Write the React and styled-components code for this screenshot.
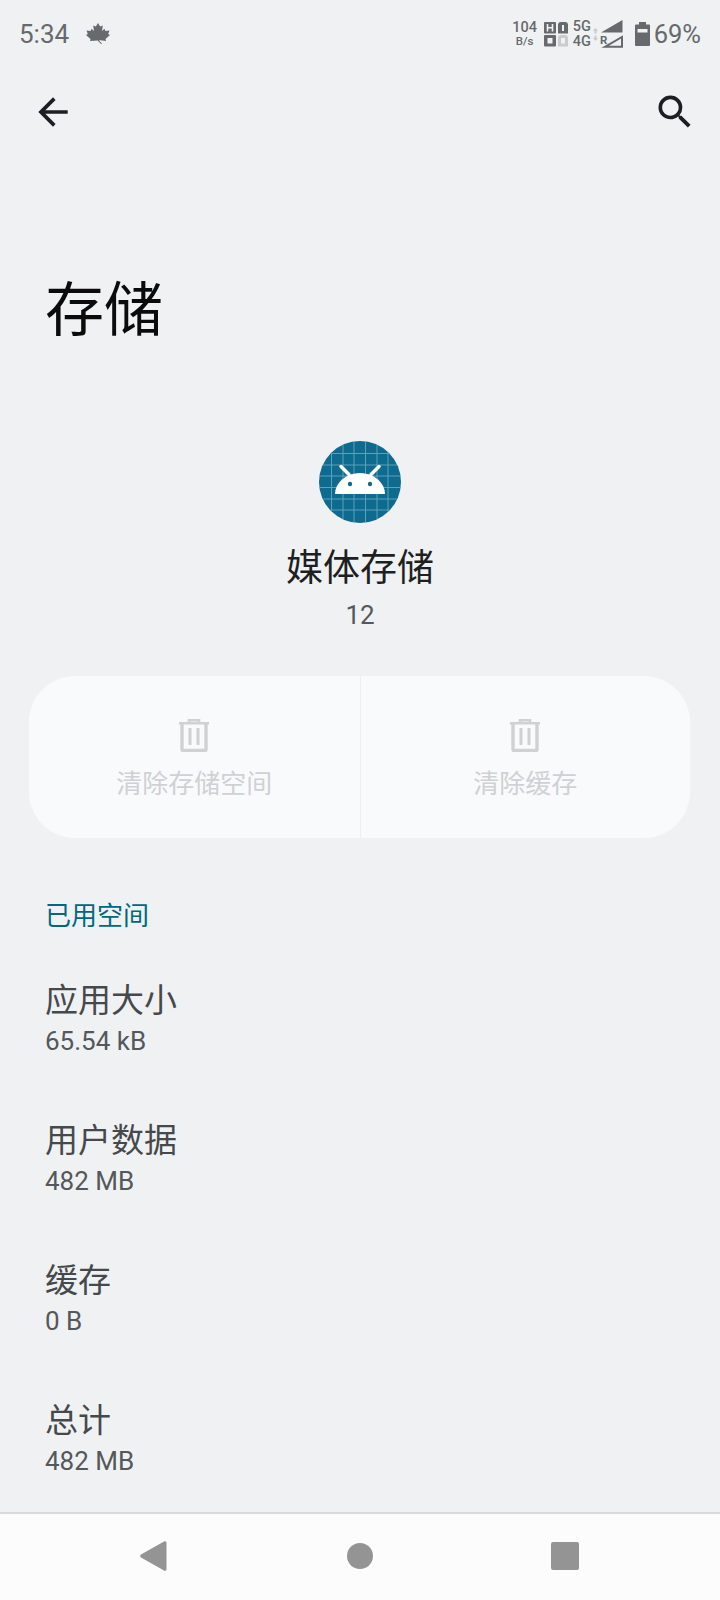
import React from "react";
import styled, { createGlobalStyle } from "styled-components";

const Global = createGlobalStyle`
  html, body { margin: 0; padding: 0; background: #f0f1f3; }
  * { box-sizing: border-box; }
`;

const CJK = `Roboto, "Noto Sans CJK SC", sans-serif`;
const INK = "#666a6c";

const Page = styled.div`
  width: 720px;
  height: 1600px;
  display: flex;
  flex-direction: column;
  background: #f0f1f3;
  font-family: ${CJK};
  overflow: hidden;
  & > * { flex-shrink: 0; }
`;

const StatusBar = styled.div`
  height: 68px;
  padding: 0 19px 0 19px;
  display: flex;
  align-items: center;
  justify-content: space-between;
  color: ${INK};
`;

const StatusLeft = styled.div`
  display: flex;
  align-items: center;
  gap: 17px;
  font-size: 26px;
`;

const StatusRight = styled.div`
  display: flex;
  align-items: center;
`;

const Slot = styled.div`
  display: flex;
  margin-left: ${(p) => p.$gap || 0}px;
`;

const Speed = styled.div`
  width: 24px;
  display: flex;
  flex-direction: column;
  align-items: center;
  font-size: 14.500px;
  line-height: 14px;
  font-weight: 500;
  & small { font-size: 11.500px; line-height: 12px; font-weight: 500; }
`;

const NetTypes = styled.div`
  margin-left: 5px;
  width: 18px;
  display: flex;
  flex-direction: column;
  font-size: 14.500px;
  line-height: 15px;
  font-weight: 500;
`;

const BatteryText = styled.span`
  font-size: 25.500px;
  margin-left: 4px;
`;

const Toolbar = styled.div`
  height: 44px;
  margin-top: 22px;
  padding: 0 23px 0 31px;
  display: flex;
  align-items: center;
  justify-content: space-between;
  color: #1c1f21;
`;

const Title = styled.h1`
  margin: 132px 0 0 45px;
  height: 90px;
  font-size: 59px;
  line-height: 90px;
  font-weight: 400;
  color: #0b0b0b;
`;

const AppHeader = styled.div`
  margin-top: 85px;
  display: flex;
  flex-direction: column;
  align-items: center;
`;

const AppName = styled.div`
  margin-top: 18px;
  font-size: 37px;
  line-height: 56px;
  color: #1d1f21;
`;

const AppVersion = styled.div`
  margin-top: 1px;
  font-size: 26px;
  line-height: 34px;
  color: #54585b;
`;

const ActionCard = styled.div`
  margin: 44px 30px 0 29px;
  height: 162px;
  border-radius: 46px;
  background: #f9fafc;
  display: grid;
  grid-template-columns: 1fr 1fr;
  overflow: hidden;
`;

const ActionButton = styled.div`
  display: flex;
  flex-direction: column;
  align-items: center;
  padding-top: 43px;
  color: #cfd1d3;
  font-size: 26px;
  line-height: 36px;
  & + & { border-left: 1px solid #eeeff1; }
  & svg { margin-bottom: 14px; }
`;

const SectionLabel = styled.div`
  margin: 58px 0 0 45px;
  font-size: 26px;
  line-height: 40px;
  color: #00687f;
`;

const Rows = styled.div`
  flex: 1 1 0;
  min-height: 0;
  margin-top: 40px;
  padding-left: 45px;
  display: flex;
  flex-direction: column;
`;

const Row = styled.div`
  flex: none;
  height: 140px;
`;

const RowTitle = styled.div`
  font-size: 33px;
  line-height: 50px;
  color: #46494c;
`;

const RowValue = styled.div`
  font-size: 26px;
  line-height: 30px;
  color: #54585b;
`;

const NavBar = styled.div`
  height: 88px;
  background: #fcfcfc;
  border-top: 2px solid #d7d9db;
  display: flex;
  align-items: center;
  justify-content: center;
  color: #949494;
  padding-bottom: 2px;
`;

const NavSlot = styled.div`
  display: flex;
  justify-content: center;
  width: 205px;
`;

const NavBack = styled.svg`
  margin-right: 3px;
`;

const ArrowBack = () => (
  <svg width="44" height="44" viewBox="0 0 24 24" fill="currentColor">
    <path d="M20 11H7.83l5.59-5.59L12 4l-8 8 8 8 1.41-1.41L7.83 13H20v-2z" />
  </svg>
);

const Search = () => (
  <svg width="44" height="44" viewBox="0 0 24 24" fill="currentColor">
    <path d="M15.5 14h-.79l-.28-.27A6.47 6.47 0 0 0 16 9.5 6.5 6.5 0 1 0 9.5 16c1.61 0 3.09-.59 4.23-1.57l.27.28v.79l5 4.99L20.49 19l-4.99-5zm-6 0C7.01 14 5 11.99 5 9.5S7.01 5 9.5 5 14 7.01 14 9.5 11.99 14 9.5 14z" />
  </svg>
);

const MapleLeaf = () => (
  <svg width="24" height="22" viewBox="0 0 24 22" fill="currentColor">
    <path d="M12 0l2.200 3.600 2.600-1-.8 5.400 2.400-2.200 1 2.200 4.100-.5-1.300 3.500L24 12l-4.500 4 .5 2-5.500-.8-1.700.3 3.200 3-1 .5-3.400-3.400L4 18l.5-2L0 12l1.800-1-1.300-3.500 4.100.5 1-2.200L8 8l-.8-5.400 2.600 1z" />
  </svg>
);

const SimBlocks = () => (
  <svg width="24" height="25" viewBox="0 0 24 25">
    <rect x="0" y="0" width="12" height="11.500" rx="1" fill={INK} />
    <rect x="0" y="13" width="12" height="11.500" rx="1" fill={INK} />
    <path d="M3.500 2v7.500M8.500 2v7.500M3.500 5.700h5" stroke="#f0f1f3" strokeWidth="1.600" fill="none" />
    <rect x="3.500" y="16" width="5" height="5.500" fill="#f0f1f3" />
    <path d="M17 0h4a3 3 0 0 1 3 3v8.500H14V3a3 3 0 0 1 3-3z" fill={INK} />
    <path d="M18 3h2v6h-2z" fill="#f0f1f3" />
    <path d="M17 13h4a3 3 0 0 1 3 3v8.500H14V16a3 3 0 0 1 3-3z" fill="#c9cbcd" />
    <rect x="17" y="16" width="4" height="5.500" fill="#f0f1f3" />
  </svg>
);

const NetArrows = () => (
  <svg width="5" height="13" viewBox="0 0 5 13" fill="#c9cbcd">
    <path d="M2.500 0 5 3H0zM2.500 13 0 10h5z" />
    <rect x="1.500" y="3" width="2" height="2.500" />
    <rect x="1.500" y="7.500" width="2" height="2.500" />
  </svg>
);

const Signal = () => (
  <svg width="23" height="28" viewBox="0 0 23 28">
    <path d="M1 12.500 22.500 0v12.500z" fill={INK} />
    <path d="M5 26.800 22 17v9.800z" fill="none" stroke={INK} strokeWidth="2" />
    <text x="0" y="23.500" fontSize="11.500" fontWeight="700" fill={INK} fontFamily="Roboto">R</text>
  </svg>
);

const Battery = () => (
  <svg width="15" height="24" viewBox="0 0 15 24">
    <rect x="4" y="0" width="7" height="3" fill={INK} />
    <path d="M1 2.500h13a1 1 0 0 1 1 1V23a1 1 0 0 1-1 1H1a1 1 0 0 1-1-1V3.500a1 1 0 0 1 1-1z" fill={INK} />
    <rect x="2.500" y="7" width="10" height="3.500" fill="#f0f1f3" />
  </svg>
);

const gridLines = [12.5, 24, 35, 46.5, 58, 69];

const AndroidBadge = () => (
  <svg width="82" height="82" viewBox="0 0 82 82">
    <defs>
      <clipPath id="badge"><circle cx="41" cy="41" r="41" /></clipPath>
    </defs>
    <circle cx="41" cy="41" r="41" fill="#0d6b90" />
    <g clipPath="url(#badge)" stroke="#5f9fb9" strokeWidth="1">
      {gridLines.map((t) => (
        <React.Fragment key={t}>
          <line x1={t} y1="0" x2={t} y2="82" />
          <line x1="0" y1={t} x2="82" y2={t} />
        </React.Fragment>
      ))}
    </g>
    <path d="M16 53a25 21 0 0 1 50 0z" fill="#fff" />
    <path d="M22 25.500l8 8M60 25.500l-8 8" stroke="#fff" strokeWidth="3.500" strokeLinecap="round" />
    <circle cx="31" cy="43" r="2.200" fill="#0d6b90" />
    <circle cx="51" cy="43" r="2.200" fill="#0d6b90" />
  </svg>
);

const Trash = () => (
  <svg width="30" height="33" viewBox="0 0 30 33" fill="none" stroke="currentColor">
    <path d="M0 4.200h30M10 3V1.200h10V3" strokeWidth="2.600" />
    <path d="M3 5v25.500A1 1 0 0 0 4 31.500h22a1 1 0 0 0 1-1V5" strokeWidth="3.400" />
    <path d="M11 9v17M19 9v17" strokeWidth="3" />
  </svg>
);

const rows = [
  ["应用大小", "65.54 kB"],
  ["用户数据", "482 MB"],
  ["缓存", "0 B"],
  ["总计", "482 MB"],
];

export default function App() {
  return (
    <Page>
      <Global />
      <StatusBar>
        <StatusLeft>
          <span>5:34</span>
          <MapleLeaf />
        </StatusLeft>
        <StatusRight>
          <Speed>
            <span>104</span>
            <small>B/s</small>
          </Speed>
          <Slot $gap={7}><SimBlocks /></Slot>
          <NetTypes>
            <div>5G</div>
            <div>4G</div>
          </NetTypes>
          <Slot $gap={2}><NetArrows /></Slot>
          <Slot $gap={2}><Signal /></Slot>
          <Slot $gap={12}><Battery /></Slot>
          <BatteryText>69%</BatteryText>
        </StatusRight>
      </StatusBar>

      <Toolbar>
        <ArrowBack />
        <Search />
      </Toolbar>

      <Title>存储</Title>

      <AppHeader>
        <AndroidBadge />
        <AppName>媒体存储</AppName>
        <AppVersion>12</AppVersion>
      </AppHeader>

      <ActionCard>
        <ActionButton>
          <Trash />
          清除存储空间
        </ActionButton>
        <ActionButton>
          <Trash />
          清除缓存
        </ActionButton>
      </ActionCard>

      <SectionLabel>已用空间</SectionLabel>

      <Rows>
        {rows.map(([title, value]) => (
          <Row key={title}>
            <RowTitle>{title}</RowTitle>
            <RowValue>{value}</RowValue>
          </Row>
        ))}
      </Rows>

      <NavBar>
        <NavSlot>
          <NavBack width="27" height="30" viewBox="0 0 27 30" fill="currentColor">
            <path d="M1 13.500 24 .5c1.500-.8 2.500 0 2.500 1.500v26c0 1.500-1 2.300-2.500 1.500L1 16.500c-1-.7-1-2.300 0-3z" />
          </NavBack>
        </NavSlot>
        <NavSlot>
          <svg width="26" height="26" viewBox="0 0 26 26" fill="currentColor">
            <circle cx="13" cy="13" r="13" />
          </svg>
        </NavSlot>
        <NavSlot>
          <svg width="28" height="28" viewBox="0 0 28 28" fill="currentColor">
            <rect width="28" height="28" rx="2" />
          </svg>
        </NavSlot>
      </NavBar>
    </Page>
  );
}
